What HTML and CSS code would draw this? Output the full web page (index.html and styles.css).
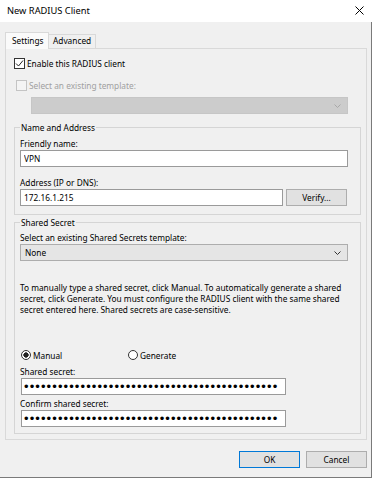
FILE: index.html
```html
<!DOCTYPE html>
<html lang="en">
<head>
  <meta charset="UTF-8">
  <title>New RADIUS Client</title>
  <link rel="stylesheet" href="styles.css">
</head>
<body>
  <div class="window">
    <div class="titlebar">
      <span class="title">New RADIUS Client</span>
      <svg class="close" width="9" height="9" viewBox="0 0 9 9">
        <path d="M0.5 0.5 L8.5 8.5 M8.5 0.5 L0.5 8.5" stroke="#000" stroke-width="1" fill="none"></path>
      </svg>
    </div>

    <div class="dialog">
      <div class="tabs">
        <div class="tab active">Settings</div>
        <div class="tab">Advanced</div>
      </div>

      <div class="panel">
        <label class="check">
          <span class="box">
            <svg width="9" height="9" viewBox="0 0 9 9"><path d="M1 4.5 L3.5 7 L8 1.5" stroke="#222" stroke-width="1" fill="none"></path></svg>
          </span>
          Enable this RADIUS client
        </label>
        <label class="check disabled">
          <span class="box"></span>
          Select an existing template:
        </label>
        <div class="combo combo-disabled">
          <svg class="chevron" width="7" height="4" viewBox="0 0 7 4"><path d="M0.5 0.5 L3.5 3.5 L6.5 0.5" stroke="#a8a8a8" fill="none"></path></svg>
        </div>

        <fieldset class="group">
          <legend>Name and Address</legend>
          <label class="field-label" for="friendly">Friendly name:</label>
          <input id="friendly" class="textbox" type="text" value="VPN">
          <label class="field-label spaced" for="address">Address (IP or DNS):</label>
          <div class="address-row">
            <input id="address" class="textbox" type="text" value="172.16.1.215">
            <button class="button verify">Verify...</button>
          </div>
        </fieldset>

        <fieldset class="group secret-group">
          <legend>Shared Secret</legend>
          <label class="field-label">Select an existing Shared Secrets template:</label>
          <div class="combo">
            None
            <svg class="chevron" width="7" height="4" viewBox="0 0 7 4"><path d="M0.5 0.5 L3.5 3.5 L6.5 0.5" stroke="#333" fill="none"></path></svg>
          </div>
          <p class="hint">To manually type a shared secret, click Manual. To automatically generate a shared<br>secret, click Generate. You must configure the RADIUS client with the same shared<br>secret entered here. Shared secrets are case-sensitive.</p>
          <div class="radio-row">
            <label class="radio"><span class="dot checked"></span>Manual</label>
            <label class="radio"><span class="dot"></span>Generate</label>
          </div>
          <label class="field-label secret-label">Shared secret:</label>
          <div class="textbox secret">•••••••••••••••••••••••••••••••••••••••••••••</div>
          <label class="field-label confirm-label">Confirm shared secret:</label>
          <div class="textbox secret">•••••••••••••••••••••••••••••••••••••••••••••</div>
        </fieldset>
      </div>

      <div class="actions">
        <button class="button default">OK</button>
        <button class="button">Cancel</button>
      </div>
    </div>
  </div>
</body>
</html>
```

FILE: styles.css
```css
* {
  box-sizing: border-box;
}

body {
  margin: 0;
  background: #ffffff;
  font-family: "Noto Sans", "Open Sans", sans-serif;
  font-size: 8.3px;
  line-height: 11px;
  color: #000;
}

.window {
  width: 372px;
  height: 478px;
  display: flex;
  flex-direction: column;
  background: #f0f0f0;
}

.titlebar {
  height: 22px;
  flex: none;
  display: flex;
  align-items: center;
  justify-content: space-between;
  padding: 0 8px 1px 7px;
  background: #ffffff;
}

.title {
  font-size: 9.3px;
}

.dialog {
  flex: 1;
  padding: 10px 4px 0 5px;
  border-right: 1px solid #7a7a7a;
  border-bottom: 1px solid #7a7a7a;
}

/* tabs */
.tabs {
  display: flex;
  align-items: flex-end;
  height: 16px;
}

.tab {
  width: 48px;
  height: 14px;
  margin-left: -1px;
  padding: 0 4px;
  line-height: 12px;
  border: 1px solid #d9d9d9;
  border-bottom: 0;
  background: #f0f0f0;
}

.tab.active {
  position: relative;
  z-index: 1;
  width: 44px;
  height: 17px;
  margin: 0 0 -1px 0;
  padding: 0 6px;
  line-height: 15px;
  background: #fafafa;
}

.panel {
  height: 392px;
  padding: 8px 5px 0 8px;
  border: 1px solid #d9d9d9;
}

/* checkboxes */
.check {
  display: flex;
  align-items: center;
  gap: 2px;
  height: 12px;
}

.check .box {
  width: 11px;
  height: 11px;
  display: flex;
  align-items: center;
  justify-content: center;
  border: 1px solid #333;
  background: #fff;
}

.check.disabled {
  margin: 10px 0 0 2px;
  color: #a0a0a0;
}

.check.disabled .box {
  border-color: #c4c4c4;
  background: #f4f4f4;
}

/* combo boxes */
.combo {
  position: relative;
  height: 17px;
  display: flex;
  align-items: center;
  margin-top: 1px;
  padding-left: 4px;
  border: 1px solid #adadad;
  background: #e5e5e5;
}

.combo-disabled {
  width: 317px;
  margin: 6px 0 0 17px;
  border-color: #c6c6c6;
  background: #cccccc;
}

.chevron {
  position: absolute;
  right: 6px;
  top: 6px;
}

/* group boxes */
.group {
  min-width: 0;
  margin: 8px 0 0;
  padding: 5px 12px 8px 5px;
  border: 1px solid #d5d5d5;
}

.group legend {
  padding: 0 1px;
  line-height: 11px;
}

.secret-group {
  margin-top: 2px;
  padding-top: 4px;
  padding-bottom: 6px;
}

.field-label {
  display: block;
}

.field-label.spaced {
  margin-top: 10px;
}

.textbox {
  display: block;
  width: 100%;
  height: 17px;
  margin: 1px 0 0;
  padding: 0 3px;
  border: 1px solid #9a9a9a;
  background: #fff;
  font: inherit;
  line-height: 15px;
  color: #000;
  outline: none;
}

.address-row {
  display: flex;
  gap: 3px;
  margin-top: 1px;
}

.address-row .textbox {
  width: 263px;
  margin: 0;
}

/* buttons */
.button {
  width: 61px;
  height: 17px;
  padding: 0;
  border: 1px solid #adadad;
  background: #e1e1e1;
  font: inherit;
  line-height: 15px;
  color: #000;
}

.button.default {
  border-color: #0078d7;
}

.actions {
  display: flex;
  justify-content: flex-end;
  gap: 6px;
  margin-top: 11px;
}

/* shared secret */
.hint {
  margin: 21px 0 0;
  white-space: nowrap;
}

.radio-row {
  display: grid;
  grid-template-columns: 107px auto;
  height: 12px;
  margin-top: 34px;
  padding-left: 1px;
}

.radio {
  display: flex;
  align-items: center;
  gap: 2px;
}

.dot {
  width: 10px;
  height: 10px;
  border: 1px solid #333;
  border-radius: 50%;
  background: #fff;
}

.dot.checked {
  background: radial-gradient(circle, #222 2.4px, #fff 2.9px);
}

.secret-label {
  margin-top: 5px;
}

.confirm-label {
  margin-top: 3px;
}

.textbox.secret {
  width: 265px;
  margin-left: 1px;
  padding-left: 2px;
  overflow: hidden;
  white-space: nowrap;
  font-family: "Liberation Sans", sans-serif;
  font-size: 13px;
  letter-spacing: 1.1px;
}
```
